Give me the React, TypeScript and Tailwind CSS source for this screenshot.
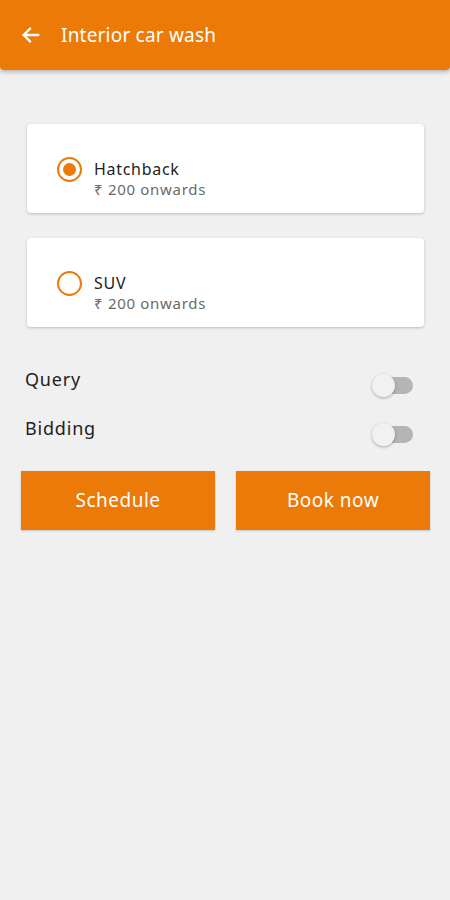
import React, { useState } from 'react';

const options = [
  { id: 'hatchback', label: 'Hatchback', price: '₹ 200 onwards' },
  { id: 'suv', label: 'SUV', price: '₹ 200 onwards' },
];

const Toggle: React.FC<{ on: boolean; onClick: () => void }> = ({ on, onClick }) => (
  <button onClick={onClick} className="relative mt-[6px] w-[41px] h-[23px] flex items-center">
    <span className={`absolute right-0 left-[6px] h-[17px] rounded-full ${on ? 'bg-[#f5b57a]' : 'bg-[#b5b5b5]'}`} />
    <span
      className={`absolute top-0 w-[23px] h-[23px] rounded-full shadow-[0_1px_3px_rgba(0,0,0,0.3)] ${
        on ? 'right-0 bg-[#ec7a08]' : 'left-0 bg-[#f1f1f1]'
      }`}
    />
  </button>
);

export default function App() {
  const [selected, setSelected] = useState('hatchback');
  const [query, setQuery] = useState(false);
  const [bidding, setBidding] = useState(false);

  return (
    <div className="w-[450px] min-h-[900px] bg-[#f0f0f0] font-['Noto_Sans','Lato',sans-serif]">
      {/* Top bar */}
      <div className="h-[70px] bg-[#ec7a08] rounded-b-[4px] shadow-[0_2px_4px_rgba(0,0,0,0.25)] flex items-center px-[20px]">
        <svg width="22" height="22" viewBox="0 0 24 24" fill="none" stroke="white" strokeWidth="2.6" strokeLinecap="round" strokeLinejoin="round">
          <path d="M20 12H4" />
          <path d="M11 5l-7 7 7 7" />
        </svg>
        <span className="ml-[19px] text-white text-[19px] tracking-[0.2px]">Interior car wash</span>
      </div>

      <div className="px-[27px] pt-[54px] flex flex-col gap-[25px] pr-[26px]">
        {options.map((o) => {
          const active = selected === o.id;
          return (
            <button
              key={o.id}
              onClick={() => setSelected(o.id)}
              className="h-[89px] bg-white rounded-[4px] shadow-[0_1px_3px_rgba(0,0,0,0.22)] flex items-center pl-[30px] pt-[2px] text-left"
            >
              <span className="w-[25px] h-[25px] rounded-full border-[2px] border-[#ec7a08] flex items-center justify-center">
                {active && <span className="w-[13px] h-[13px] rounded-full bg-[#ec7a08]" />}
              </span>
              <span className="ml-[12px] pt-[18px] flex flex-col tracking-[0.7px]">
                <span className="text-[16px] leading-[20px] text-[#222]">{o.label}</span>
                <span className="text-[15px] leading-[20px] text-[#6a6a6a]">{o.price}</span>
              </span>
            </button>
          );
        })}
      </div>

      <div className="px-[25px] pr-[37px] mt-[41px] flex flex-col gap-[27px]">
        <div className="flex items-start justify-between h-[22px]">
          <span className="text-[18px] leading-[22px] tracking-[0.8px] text-[#222]">Query</span>
          <Toggle on={query} onClick={() => setQuery(!query)} />
        </div>
        <div className="flex items-start justify-between h-[22px]">
          <span className="text-[18px] leading-[22px] tracking-[0.8px] text-[#222]">Bidding</span>
          <Toggle on={bidding} onClick={() => setBidding(!bidding)} />
        </div>
      </div>

      <div className="mt-[32px] px-[21px] pr-[20px] grid grid-cols-2 gap-[21px]">
        <button className="h-[59px] bg-[#ec7a08] text-white text-[19px] tracking-[0.5px] shadow-[0_1px_2px_rgba(0,0,0,0.2)]">Schedule</button>
        <button className="h-[59px] bg-[#ec7a08] text-white text-[19px] tracking-[0.5px] shadow-[0_1px_2px_rgba(0,0,0,0.2)]">Book now</button>
      </div>
    </div>
  );
}
